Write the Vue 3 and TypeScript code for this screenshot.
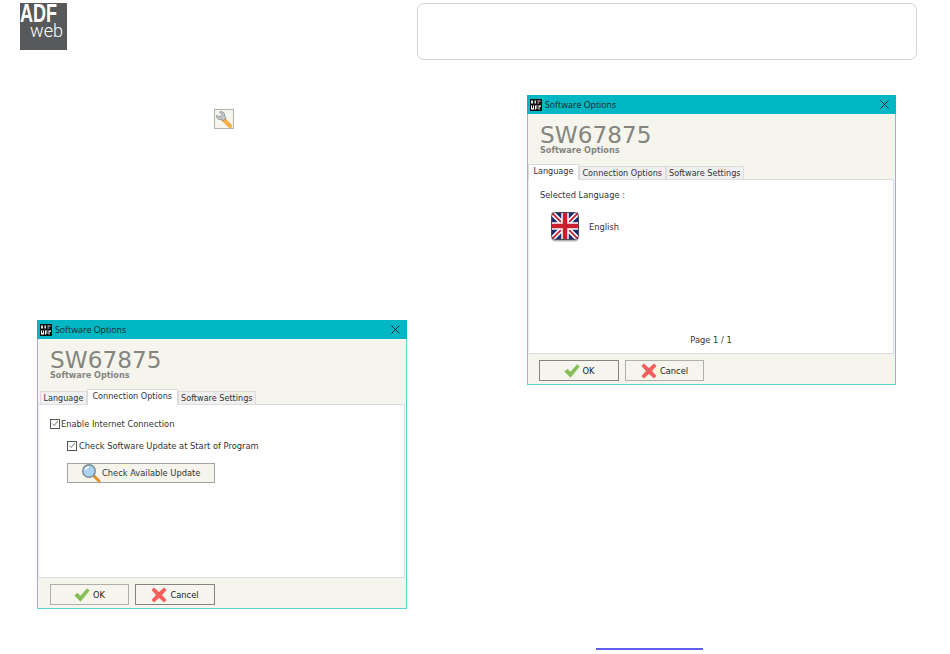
<template>
  <div class="page">
    <!-- Cabecera -->
    <div class="top">
      <svg class="logo" viewBox="0 0 47 47" width="47" height="47">
        <rect width="47" height="47" fill="#58595b" />
        <text x="0" y="19" class="logo-adf" textLength="37" lengthAdjust="spacingAndGlyphs">ADF</text>
        <text x="10" y="34" class="logo-web" textLength="33" lengthAdjust="spacingAndGlyphs">web</text>
      </svg>
      <div class="top-box"></div>
    </div>

    <div class="columns">
      <div class="col col-left">
        <svg class="tool" viewBox="0 0 20 20" width="20" height="20">
          <rect x="0.5" y="0.5" width="19" height="19" fill="#f5f5ee" stroke="#b4b4ae" />
          <path d="M9 10 L16 17" stroke="#f4b04a" stroke-width="4.4" stroke-linecap="round" />
          <path d="M2.5 6.5 L6 8 L8 5.5 L5.5 3 C8 1.8 11 3.5 10.8 7 L12 9.5 L9.5 11.5 L7 10.6 C4.5 11 2.2 9.2 2.5 6.5Z" fill="#c2c6ca" stroke="#7f8388" stroke-width="0.7" />
        </svg>

        <div class="dialog dialog-left">
          <div class="titlebar">
            <svg class="app-icon" viewBox="0 0 12 12" width="12" height="12">
              <rect width="12" height="12" fill="#111" />
              <path d="M1 1.500h2v3h-2z M4.500 1.500h1.500v3h-1.500z M7.500 1.500h3v1h-3z M7.500 3.500h1.500v1h-1.500z" fill="#ddd" />
              <path d="M1 6.500h1v4h-1z M3 6.500h1v4h-1z M1 9h3v1.500h-3z M5 6.500h2.500v1h-1.500v1h1.500v1h-1.500v1h-1z M8.500 6.500h2.500v1.200h-1.500v2.800h-1z" fill="#fff" />
            </svg>
            <span class="title-text">Software Options</span>
            <svg class="close" viewBox="0 0 9 9" width="9" height="9">
              <path d="M0.500 0.500 L8.500 8.500 M8.500 0.500 L0.500 8.500" stroke="#123" stroke-width="1" />
            </svg>
          </div>
          <div class="head">
            <div class="code">SW67875</div>
            <div class="sub">Software Options</div>
          </div>
          <div class="tabs">
            <div v-for="t in tabs" :key="t" class="tab" :class="{ active: t === 'Connection Options' }">{{ t }}</div>
          </div>
          <div class="panel panel-conn">
            <div class="check-row">
              <span class="box"><svg viewBox="0 0 10 10" width="9" height="9"><path d="M1.500 5 L4 7.500 L8.500 2" fill="none" stroke="#555" stroke-width="1" /></svg></span>
              Enable Internet Connection
            </div>
            <div class="check-row sub-row">
              <span class="box"><svg viewBox="0 0 10 10" width="9" height="9"><path d="M1.500 5 L4 7.500 L8.500 2" fill="none" stroke="#555" stroke-width="1" /></svg></span>
              Check Software Update at Start of Program
            </div>
            <div class="update-btn">
              <svg viewBox="0 0 20 20" width="20" height="20">
                <path d="M12.500 12.500 L18 18" stroke="#e0912f" stroke-width="3" stroke-linecap="round" />
                <circle cx="8" cy="8" r="6.300" fill="#a9d3f0" stroke="#7d8a96" stroke-width="1.400" />
                <path d="M4.500 7 A4 4 0 0 1 8 4" fill="none" stroke="#fff" stroke-width="1.400" />
              </svg>
              <span>Check Available Update</span>
            </div>
          </div>
          <div class="footer">
            <div class="btn">
              <svg viewBox="0 0 16 14" width="16" height="14"><path d="M0.500 7.500 L3.500 5 L6.500 8 L13 0.500 L15.500 2.500 L6.500 13.500Z" fill="#84bc55" stroke="#a5d07e" stroke-width="0.600" /></svg>
              OK
            </div>
            <div class="btn btn-dark btn-wide">
              <svg viewBox="0 0 16 16" width="16" height="16"><path d="M0.500 3 L3 0.500 L8 5 L13 0.500 L15.500 3 L11 8 L15.500 13 L13 15.500 L8 11 L3 15.500 L0.500 13 L5 8Z" fill="#f2605f" /></svg>
              Cancel
            </div>
          </div>
        </div>
      </div>

      <div class="col col-right">
        <div class="dialog dialog-right">
          <div class="titlebar">
            <svg class="app-icon" viewBox="0 0 12 12" width="12" height="12">
              <rect width="12" height="12" fill="#111" />
              <path d="M1 1.500h2v3h-2z M4.500 1.500h1.500v3h-1.500z M7.500 1.500h3v1h-3z M7.500 3.500h1.500v1h-1.500z" fill="#ddd" />
              <path d="M1 6.500h1v4h-1z M3 6.500h1v4h-1z M1 9h3v1.500h-3z M5 6.500h2.500v1h-1.500v1h1.500v1h-1.500v1h-1z M8.500 6.500h2.500v1.200h-1.500v2.800h-1z" fill="#fff" />
            </svg>
            <span class="title-text">Software Options</span>
            <svg class="close" viewBox="0 0 9 9" width="9" height="9">
              <path d="M0.500 0.500 L8.500 8.500 M8.500 0.500 L0.500 8.500" stroke="#123" stroke-width="1" />
            </svg>
          </div>
          <div class="head">
            <div class="code">SW67875</div>
            <div class="sub">Software Options</div>
          </div>
          <div class="tabs">
            <div v-for="t in tabs" :key="t" class="tab" :class="{ active: t === 'Language' }">{{ t }}</div>
          </div>
          <div class="panel panel-lang">
            <div class="selected">Selected Language :</div>
            <div class="lang-row">
              <svg class="flag" viewBox="0 0 28 30" width="28" height="30">
                <defs>
                  <clipPath id="flagclip"><rect x="0" y="0" width="28" height="28" rx="4" /></clipPath>
                </defs>
                <rect x="0.500" y="1" width="27" height="28.500" rx="4" fill="#b5b5b5" />
                <g clip-path="url(#flagclip)">
                  <rect width="28" height="28" fill="#1f2a6b" />
                  <path d="M0 0 L28 28 M28 0 L0 28" stroke="#fff" stroke-width="5" />
                  <path d="M0 0 L28 28 M28 0 L0 28" stroke="#c8202f" stroke-width="1.800" />
                  <path d="M14 0 V28 M0 14 H28" stroke="#fff" stroke-width="7.500" />
                  <path d="M14 0 V28 M0 14 H28" stroke="#c8202f" stroke-width="4.500" />
                  <rect x="0.500" y="0.500" width="27" height="27" rx="4" fill="none" stroke="#4a4a55" stroke-width="1" />
                </g>
              </svg>
              <span>English</span>
            </div>
            <div class="pager">Page 1 / 1</div>
          </div>
          <div class="footer">
            <div class="btn btn-dark btn-wide">
              <svg viewBox="0 0 16 14" width="16" height="14"><path d="M0.500 7.500 L3.500 5 L6.500 8 L13 0.500 L15.500 2.500 L6.500 13.500Z" fill="#84bc55" stroke="#a5d07e" stroke-width="0.600" /></svg>
              OK
            </div>
            <div class="btn">
              <svg viewBox="0 0 16 16" width="16" height="16"><path d="M0.500 3 L3 0.500 L8 5 L13 0.500 L15.500 3 L11 8 L15.500 13 L13 15.500 L8 11 L3 15.500 L0.500 13 L5 8Z" fill="#f2605f" /></svg>
              Cancel
            </div>
          </div>
        </div>
        <div class="link-line"></div>
      </div>
    </div>
  </div>
</template>

<script setup lang="ts">
const tabs: string[] = ["Language", "Connection Options", "Software Settings"];
</script>

<style>
html,
body {
  margin: 0;
  background: #fff;
}
</style>

<style scoped>
.page {
  width: 950px;
  height: 654px;
  overflow: hidden;
  background: #fff;
  font-family: "DejaVu Sans", Verdana, sans-serif;
  font-size: 8.3px;
  color: #333;
}

/* Cabecera */
.top {
  display: flex;
  justify-content: space-between;
  align-items: flex-start;
  height: 57px;
  padding: 3px 33px 0 20px;
}

.logo-adf {
  font-family: "Liberation Sans", sans-serif;
  font-size: 26px;
  font-weight: bold;
  fill: #fff;
}

.logo-web {
  font-family: Roboto, "Liberation Sans", sans-serif;
  font-size: 19px;
  font-weight: 300;
  fill: #fff;
}

.top-box {
  width: 498px;
  height: 55px;
  border: 1px solid #d2d2d2;
  border-radius: 7px;
}

/* Columnas */
.columns {
  display: flex;
}

.col-left {
  width: 417px;
  box-sizing: border-box;
  padding-left: 37px;
}

.col-right {
  padding-left: 110px;
}

.tool {
  display: block;
  margin: 49px 0 191px 177px;
}

/* Ventana */
.dialog {
  display: flex;
  flex-direction: column;
  box-sizing: border-box;
  background: #f5f5ee;
  border: 1px solid #5fd0d2;
  border-top: none;
}

.dialog-left {
  width: 370px;
  height: 289px;
}

.dialog-right {
  width: 369px;
  height: 290px;
  margin-top: 35px;
}

.titlebar {
  display: flex;
  align-items: center;
  flex: none;
  height: 19px;
  margin: 0 -1px;
  padding: 0 7px 0 3px;
  background: #00b7c3;
  color: #222;
}

.app-icon {
  margin-right: 3px;
}

.title-text {
  font-family: "Open Sans", sans-serif;
  font-size: 8.8px;
}

.close {
  margin-left: auto;
}

.head {
  flex: none;
  height: 50px;
  padding: 10px 0 0 12px;
  box-sizing: border-box;
}

.code {
  font-size: 23.2px;
  line-height: 21px;
  color: #85857f;
}

.sub {
  font-size: 8.1px;
  font-weight: bold;
  line-height: 10px;
  color: #85857f;
}

.tabs {
  display: flex;
  flex: none;
  align-items: flex-end;
  height: 15px;
  padding-left: 2px;
  font-size: 8.1px;
}

.tab {
  height: 13px;
  box-sizing: border-box;
  padding: 0 2.5px;
  line-height: 13px;
  background: #f0f0f0;
  border: 1px solid #dcdcdc;
  border-bottom: none;
  white-space: nowrap;
}

.tab.active {
  position: relative;
  height: 16px;
  margin-bottom: -1px;
  padding: 0 4.5px;
  line-height: 13px;
  background: #fff;
  z-index: 1;
}

.tab.active:first-child {
  margin-left: -2px;
}

.panel {
  display: flex;
  flex: 1;
  flex-direction: column;
  min-height: 0;
  margin-right: 1px;
  background: #fff;
  border: 1px solid #dcdce0;
  border-left-color: #ececec;
  box-sizing: border-box;
}

.panel-conn {
  padding: 13px 0 0 11px;
}

.check-row {
  display: flex;
  align-items: center;
  gap: 1px;
  height: 11px;
}

.sub-row {
  margin: 11px 0 0 17px;
  gap: 2px;
}

.box {
  display: flex;
  align-items: center;
  justify-content: center;
  width: 10px;
  height: 10px;
  box-sizing: border-box;
  border: 1px solid #555;
}

.update-btn {
  display: flex;
  align-items: center;
  gap: 1px;
  width: 148px;
  height: 20px;
  margin: 12px 0 0 17px;
  padding-left: 13px;
  box-sizing: border-box;
  background: #f5f5ee;
  border: 1px solid #a3a3a0;
}

.panel-lang {
  padding: 10px 0 0 11px;
}

.lang-row {
  display: flex;
  align-items: center;
  gap: 10px;
  margin: 12px 0 0 11px;
}

.flag {
  display: block;
}

.pager {
  margin: auto 0 8px -11px;
  text-align: center;
}

.footer {
  display: flex;
  flex: none;
  gap: 6px;
  height: 30px;
  padding: 6px 0 0 12px;
  box-sizing: border-box;
}

.dialog-right .footer {
  padding-left: 11px;
}

.btn {
  display: flex;
  align-items: center;
  justify-content: center;
  gap: 3px;
  width: 79px;
  height: 21px;
  box-sizing: border-box;
  border: 1px solid #b0b0aa;
  color: #222;
}

.btn-wide {
  width: 80px;
}

.btn-dark {
  border-color: #85857f;
}

.link-line {
  width: 107px;
  height: 2px;
  margin: 263px 0 0 69px;
  background: #5f5fee;
}
</style>
